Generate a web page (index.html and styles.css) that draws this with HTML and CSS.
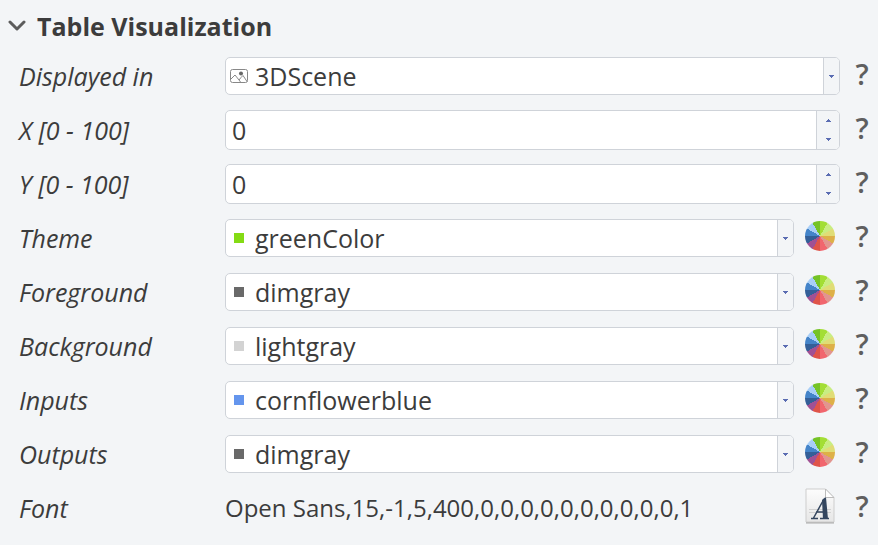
FILE: index.html
```
<!DOCTYPE html>
<html lang="en">
<head>
  <meta charset="UTF-8">
  <title>Table Visualization</title>
  <link rel="stylesheet" href="styles.css">
</head>
<body>

  <!-- Shared icons -->
  <svg class="defs" width="0" height="0" aria-hidden="true">
    <symbol id="down" viewBox="0 0 5 3"><path d="M0 0h5v1H4v1H3v1H2V2H1V1H0z"/></symbol>
    <symbol id="up" viewBox="0 0 5 3"><path d="M2 0h1v1h1v1h1v1H0V2h1V1h1z"/></symbol>
  </svg>

  <form class="panel">
    <button type="button" class="section-title" aria-expanded="true">
      <svg class="chevron" viewBox="0 0 18 12"><path d="M2 2l7 7 7-7"/></svg>
      <span>Table Visualization</span>
    </button>

    <div class="row">
      <label for="displayed">Displayed in</label>
      <div class="combo">
        <svg class="picture" viewBox="0 0 18 14">
          <rect x="0.5" y="0.5" width="17" height="13" rx="2"/>
          <path d="M1 10l4-4 4 5 2-2.500 2-2 4 6M9 11l1.500 2"/>
          <circle cx="11" cy="4.500" r="2"/>
        </svg>
        <select id="displayed"><option>3DScene</option></select>
        <span class="drop"><svg class="arrow"><use href="#down"/></svg></span>
      </div>
      <button type="button" class="help" aria-label="Help: Displayed in">?</button>
    </div>

    <div class="row">
      <label for="pos-x">X [0 - 100]</label>
      <div class="spin">
        <input type="number" id="pos-x" min="0" max="100" value="0">
        <div class="steps">
          <button type="button" data-step="1" aria-label="Increase X"><svg class="arrow"><use href="#up"/></svg></button>
          <button type="button" data-step="-1" aria-label="Decrease X"><svg class="arrow"><use href="#down"/></svg></button>
        </div>
      </div>
      <button type="button" class="help" aria-label="Help: X">?</button>
    </div>

    <div class="row">
      <label for="pos-y">Y [0 - 100]</label>
      <div class="spin">
        <input type="number" id="pos-y" min="0" max="100" value="0">
        <div class="steps">
          <button type="button" data-step="1" aria-label="Increase Y"><svg class="arrow"><use href="#up"/></svg></button>
          <button type="button" data-step="-1" aria-label="Decrease Y"><svg class="arrow"><use href="#down"/></svg></button>
        </div>
      </div>
      <button type="button" class="help" aria-label="Help: Y">?</button>
    </div>

    <div class="row">
      <label for="theme">Theme</label>
      <div class="combo">
        <span class="swatch green"></span>
        <select id="theme"><option>greenColor</option></select>
        <span class="drop"><svg class="arrow"><use href="#down"/></svg></span>
      </div>
      <button type="button" class="wheel" aria-label="Pick theme color"></button>
      <button type="button" class="help" aria-label="Help: Theme">?</button>
    </div>

    <div class="row">
      <label for="foreground">Foreground</label>
      <div class="combo">
        <span class="swatch dimgray"></span>
        <select id="foreground"><option>dimgray</option></select>
        <span class="drop"><svg class="arrow"><use href="#down"/></svg></span>
      </div>
      <button type="button" class="wheel" aria-label="Pick foreground color"></button>
      <button type="button" class="help" aria-label="Help: Foreground">?</button>
    </div>

    <div class="row">
      <label for="background">Background</label>
      <div class="combo">
        <span class="swatch lightgray"></span>
        <select id="background"><option>lightgray</option></select>
        <span class="drop"><svg class="arrow"><use href="#down"/></svg></span>
      </div>
      <button type="button" class="wheel" aria-label="Pick background color"></button>
      <button type="button" class="help" aria-label="Help: Background">?</button>
    </div>

    <div class="row">
      <label for="inputs">Inputs</label>
      <div class="combo">
        <span class="swatch cornflower"></span>
        <select id="inputs"><option>cornflowerblue</option></select>
        <span class="drop"><svg class="arrow"><use href="#down"/></svg></span>
      </div>
      <button type="button" class="wheel" aria-label="Pick inputs color"></button>
      <button type="button" class="help" aria-label="Help: Inputs">?</button>
    </div>

    <div class="row">
      <label for="outputs">Outputs</label>
      <div class="combo">
        <span class="swatch dimgray"></span>
        <select id="outputs"><option>dimgray</option></select>
        <span class="drop"><svg class="arrow"><use href="#down"/></svg></span>
      </div>
      <button type="button" class="wheel" aria-label="Pick outputs color"></button>
      <button type="button" class="help" aria-label="Help: Outputs">?</button>
    </div>

    <div class="row">
      <label for="font">Font</label>
      <output class="value" id="font">Open Sans,15,-1,5,400,0,0,0,0,0,0,0,0,0,0,1</output>
      <button type="button" class="font-button" aria-label="Choose font">
        <svg viewBox="0 0 30 36">
          <defs>
            <linearGradient id="paper" x1="0" y1="0" x2="0" y2="1">
              <stop offset="0" stop-color="#fdfdfd"/>
              <stop offset="1" stop-color="#e6e6e6"/>
            </linearGradient>
          </defs>
          <path d="M1 34.500h28" stroke="#a9a9a9" stroke-width="2"/>
          <path d="M1 1h19.500l8.500 9v24H1z" fill="url(#paper)" stroke="#cdcdcd"/>
          <path d="M20.500 1v8.500H29z" fill="#fff" stroke="#bcbcbc"/>
          <path d="M4 21.500h22M4 24.500h22" stroke="#d2d2d2"/>
          <path d="M6 30.500h7M15 30.500h9M8 31L19 11M11 24h9" stroke="#34465f" stroke-width="1.500" fill="none"/>
          <path d="M17 12l3-2.500h1L23 31h-5z" fill="#34465f"/>
        </svg>
      </button>
      <button type="button" class="help" aria-label="Help: Font">?</button>
    </div>
  </form>

  <script>
    // spin box arrows
    document.querySelectorAll('.steps button').forEach(btn => {
      btn.addEventListener('click', () => {
        const input = btn.closest('.spin').querySelector('input');
        if (btn.dataset.step === '1') input.stepUp();
        else input.stepDown();
      });
    });
  </script>
</body>
</html>
```
FILE: styles.css
```
* {
  box-sizing: border-box;
}

body {
  margin: 0;
  background: #f3f5f7;
  color: #3c3c3c;
  font-family: "Open Sans", sans-serif;
  font-size: 25px;
  line-height: 34px;
}

button,
input,
select {
  margin: 0;
  padding: 0;
  border: 0;
  background: none;
  color: inherit;
  font: inherit;
}

.defs {
  position: absolute;
}

.panel {
  padding: 2px 5px 10px 0;
}

.section-title {
  display: flex;
  align-items: center;
  gap: 11px;
  height: 47px;
  padding: 0 0 0 8px;
  font-weight: 700;
}

.chevron {
  width: 18px;
  height: 12px;
  fill: none;
  stroke: #5c5c5c;
  stroke-width: 3;
  stroke-linecap: round;
  stroke-linejoin: round;
}

.row {
  display: flex;
  align-items: center;
  height: 54px;
}

.row label {
  flex: 0 0 225px;
  padding-left: 19px;
  font-style: italic;
}

.combo,
.spin {
  display: flex;
  flex: 1;
  min-width: 0;
  height: 38px;
  background: #fff;
  border: 1px solid #cfd3d9;
  border-radius: 5px;
  overflow: hidden;
}

.combo {
  align-items: center;
}

.spin {
  height: 40px;
}

.combo select,
.spin input {
  flex: 1;
  min-width: 0;
  height: 36px;
  appearance: none;
  outline: none;
}

.spin input {
  height: 38px;
  padding-left: 6px;
  appearance: textfield;
}

.spin input::-webkit-inner-spin-button {
  appearance: none;
}

.drop {
  display: flex;
  align-items: center;
  justify-content: center;
  align-self: stretch;
  width: 16px;
  background: #f3f5f7;
  border-left: 1px solid #cfd3d9;
}

.steps {
  display: flex;
  flex-direction: column;
  width: 23px;
  background: #f3f5f7;
  border-left: 1px solid #cfd3d9;
}

.steps button {
  display: flex;
  flex: 1;
  align-items: center;
  justify-content: center;
}

.arrow {
  width: 5px;
  height: 3px;
  fill: #5a6cb2;
}

.picture {
  width: 18px;
  height: 14px;
  margin: 0 7px 0 4px;
  fill: none;
  stroke: #888;
}

.picture circle {
  fill: #666;
  stroke: none;
}

.swatch {
  width: 10px;
  height: 10px;
  margin: 0 11px 0 8px;
}

.green {
  background: #84db14;
}

.dimgray {
  background: dimgray;
}

.lightgray {
  background: lightgray;
}

.cornflower {
  background: cornflowerblue;
}

.wheel {
  width: 30px;
  height: 30px;
  margin: 0 5px 4px 11px;
  border-radius: 50%;
  background: conic-gradient(from -30deg,
    #75c326 0 30deg, #a3de35 0 60deg, #c9ed82 0 90deg,
    #e0dd76 0 120deg, #deb048 0 150deg, #e2958f 0 180deg,
    #f1666e 0 210deg, #df5449 0 240deg, #a05194 0 270deg,
    #345f98 0 300deg, #4484c9 0 330deg, #a8cef6 0 360deg);
}

.value {
  flex: 1;
  font-size: 24px;
  white-space: nowrap;
}

.font-button {
  width: 30px;
  height: 36px;
  margin: 0 5px 4px 0;
}

.font-button svg {
  display: block;
  width: 30px;
  height: 36px;
}

.help {
  width: 22px;
  margin-left: 11px;
  padding-bottom: 4px;
  color: #5f5f5f;
  font-size: 29px;
  font-weight: 600;
}
```
